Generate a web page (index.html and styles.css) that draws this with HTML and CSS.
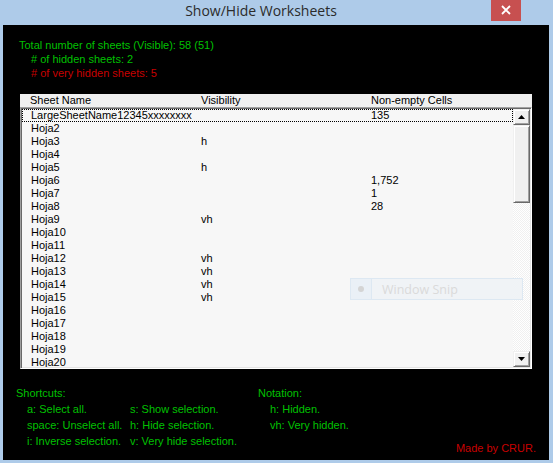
FILE: index.html
```html
<!DOCTYPE html>
<html>
<head>
<meta charset="utf-8">
<link rel="stylesheet" href="styles.css">
</head>
<body>
<div class="window">
  <div class="titlebar">
    <div class="title">Show/Hide Worksheets</div>
    <div class="close">
      <svg width="10" height="10" viewBox="0 0 10 10"><path d="M1 1 L9 9 M9 1 L1 9" stroke="#fff" stroke-width="1.8" fill="none"/></svg>
    </div>
  </div>
  <div class="content">
    <div class="info">
      <div class="green">Total number of sheets (Visible): 58 (51)</div>
      <div class="green indent"># of hidden sheets: 2</div>
      <div class="red indent"># of very hidden sheets: 5</div>
    </div>
    <div class="listwrap">
      <div class="header">
        <div class="c1">Sheet Name</div>
        <div class="c2">Visibility</div>
        <div class="c3">Non-empty Cells</div>
      </div>
      <div class="listbox">
        <div class="rows">
          <div class="row focus"><div class="c1">LargeSheetName12345xxxxxxxx</div><div class="c2"></div><div class="c3">135</div></div>
          <div class="row"><div class="c1">Hoja2</div><div class="c2"></div><div class="c3"></div></div>
          <div class="row"><div class="c1">Hoja3</div><div class="c2">h</div><div class="c3"></div></div>
          <div class="row"><div class="c1">Hoja4</div><div class="c2"></div><div class="c3"></div></div>
          <div class="row"><div class="c1">Hoja5</div><div class="c2">h</div><div class="c3"></div></div>
          <div class="row"><div class="c1">Hoja6</div><div class="c2"></div><div class="c3">1,752</div></div>
          <div class="row"><div class="c1">Hoja7</div><div class="c2"></div><div class="c3">1</div></div>
          <div class="row"><div class="c1">Hoja8</div><div class="c2"></div><div class="c3">28</div></div>
          <div class="row"><div class="c1">Hoja9</div><div class="c2">vh</div><div class="c3"></div></div>
          <div class="row"><div class="c1">Hoja10</div><div class="c2"></div><div class="c3"></div></div>
          <div class="row"><div class="c1">Hoja11</div><div class="c2"></div><div class="c3"></div></div>
          <div class="row"><div class="c1">Hoja12</div><div class="c2">vh</div><div class="c3"></div></div>
          <div class="row"><div class="c1">Hoja13</div><div class="c2">vh</div><div class="c3"></div></div>
          <div class="row"><div class="c1">Hoja14</div><div class="c2">vh</div><div class="c3"></div></div>
          <div class="row"><div class="c1">Hoja15</div><div class="c2">vh</div><div class="c3"></div></div>
          <div class="row"><div class="c1">Hoja16</div><div class="c2"></div><div class="c3"></div></div>
          <div class="row"><div class="c1">Hoja17</div><div class="c2"></div><div class="c3"></div></div>
          <div class="row"><div class="c1">Hoja18</div><div class="c2"></div><div class="c3"></div></div>
          <div class="row"><div class="c1">Hoja19</div><div class="c2"></div><div class="c3"></div></div>
          <div class="row"><div class="c1">Hoja20</div><div class="c2"></div><div class="c3"></div></div>
        </div>
        <div class="scrollbar">
          <div class="sbtn"><svg width="7" height="4" viewBox="0 0 7 4"><path d="M3.5 0 L7 4 L0 4 Z" fill="#000"/></svg></div>
          <div class="thumb"></div>
          <div class="track"></div>
          <div class="sbtn"><svg width="7" height="4" viewBox="0 0 7 4"><path d="M0 0 L7 0 L3.5 4 Z" fill="#000"/></svg></div>
        </div>
        <div class="snip">
          <div class="snip-icon"><span class="dot"></span></div>
          <div class="snip-text">Window Snip</div>
        </div>
      </div>
    </div>
    <div class="footer">
      <div class="shortcuts">
        <div class="green">Shortcuts:</div>
        <div class="sgrid green">
          <div>a: Select all.</div><div>s: Show selection.</div>
          <div>space: Unselect all.</div><div>h: Hide selection.</div>
          <div>i: Inverse selection.</div><div>v: Very hide selection.</div>
        </div>
      </div>
      <div class="notation">
        <div class="green">Notation:</div>
        <div class="nlist green">
          <div>h: Hidden.</div>
          <div>vh: Very hidden.</div>
        </div>
      </div>
      <div class="madeby red">Made by CRUR.</div>
    </div>
  </div>
</div>
</body>
</html>
```

FILE: styles.css
```css
* { box-sizing: border-box; }
html, body { margin: 0; padding: 0; }
body {
  width: 553px;
  height: 463px;
  overflow: hidden;
  font-family: "Liberation Sans", Arial, sans-serif;
  font-size: 11px;
}
.window {
  width: 553px;
  height: 463px;
  background: #aecbe9;
  display: flex;
  flex-direction: column;
  padding: 0 4px 3px 3px;
}
.titlebar {
  height: 25px;
  display: flex;
  align-items: flex-start;
  margin: 0 -4px 0 -3px;
  padding-right: 32px;
}
.title {
  flex: 1;
  text-align: center;
  padding-left: 31px;
  font-family: "Open Sans", "Noto Sans", sans-serif;
  font-size: 14px;
  line-height: 22px;
  color: #2b2b2b;
}
.close {
  width: 30px;
  height: 21px;
  background: #c75050;
  display: flex;
  align-items: center;
  justify-content: center;
  padding-bottom: 2px;
}
.content {
  flex: 1;
  background: #000;
  position: relative;
  padding-top: 13px;
  display: flex;
  flex-direction: column;
}
.green { color: #00c000; }
.red { color: #c80000; }
.info {
  padding-left: 16px;
  line-height: 14px;
}
.indent { padding-left: 12px; }
.listwrap {
  margin-top: 14px;
  margin-left: 17px;
  width: 512px;
}
.header {
  height: 13px;
  background: #f0f0f0;
  display: flex;
  line-height: 13px;
  color: #000;
}
.header .c1 { width: 181px; padding-left: 10px; }
.header .c2 { width: 170px; }
.header .c3 { flex: 1; }
.listbox {
  position: relative;
  height: 262px;
  background: #f7f7f7;
  border-top: 1px solid #a0a0a0;
  border-left: 1px solid #a0a0a0;
  border-right: 1px solid #fff;
  border-bottom: 1px solid #fff;
  box-shadow: inset 1px 1px 0 #696969, inset -1px -1px 0 #e3e3e3;
  padding: 1px;
  display: flex;
  overflow: hidden;
}
.rows {
  flex: 1;
  overflow: hidden;
  color: #000;
}
.row {
  height: 13px;
  line-height: 13px;
  display: flex;
  white-space: nowrap;
}
.row .c1 { width: 179px; padding-left: 9px; }
.row .c2 { width: 170px; }
.row .c3 { flex: 1; }
.row.focus {
  outline: 1px dotted #000;
  outline-offset: -1px;
}
.scrollbar {
  width: 17px;
  display: flex;
  flex-direction: column;
  background: repeating-conic-gradient(#ffffff 0 25%, #f0f0f0 0 50%) 0 0 / 2px 2px;
}
.sbtn, .thumb {
  background: #f0f0f0;
  border-top: 1px solid #f0f0f0;
  border-left: 1px solid #f0f0f0;
  border-right: 1px solid #696969;
  border-bottom: 1px solid #696969;
  box-shadow: inset 1px 1px 0 #fff, inset -1px -1px 0 #a0a0a0;
}
.sbtn {
  height: 16px;
  display: flex;
  align-items: center;
  justify-content: center;
}
.thumb { height: 78px; }
.track { flex: 1; }
.snip {
  position: absolute;
  left: 329px;
  top: 170px;
  width: 173px;
  height: 22px;
  border: 1px solid #dde8f2;
  background: #f0f3f6;
  display: flex;
  align-items: center;
}
.snip-icon {
  width: 21px;
  height: 100%;
  border-right: 1px solid #dde8f2;
  background: #eaf0f6;
  display: flex;
  align-items: center;
  justify-content: center;
}
.dot {
  width: 6px;
  height: 6px;
  border-radius: 50%;
  background: #d4d4d4;
}
.snip-text {
  padding-left: 10px;
  font-family: "Open Sans", sans-serif;
  font-size: 12.5px;
  color: #dadada;
}
.footer {
  margin-top: 16px;
  display: flex;
  line-height: 16px;
  padding-left: 13px;
  padding-right: 13px;
}
.shortcuts { width: 242px; }
.sgrid {
  display: grid;
  grid-template-columns: 103px auto;
  padding-left: 11px;
}
.notation { width: 150px; }
.nlist { padding-left: 12px; }
.madeby {
  margin-left: auto;
  align-self: flex-start;
  margin-top: 55px;
}
```
